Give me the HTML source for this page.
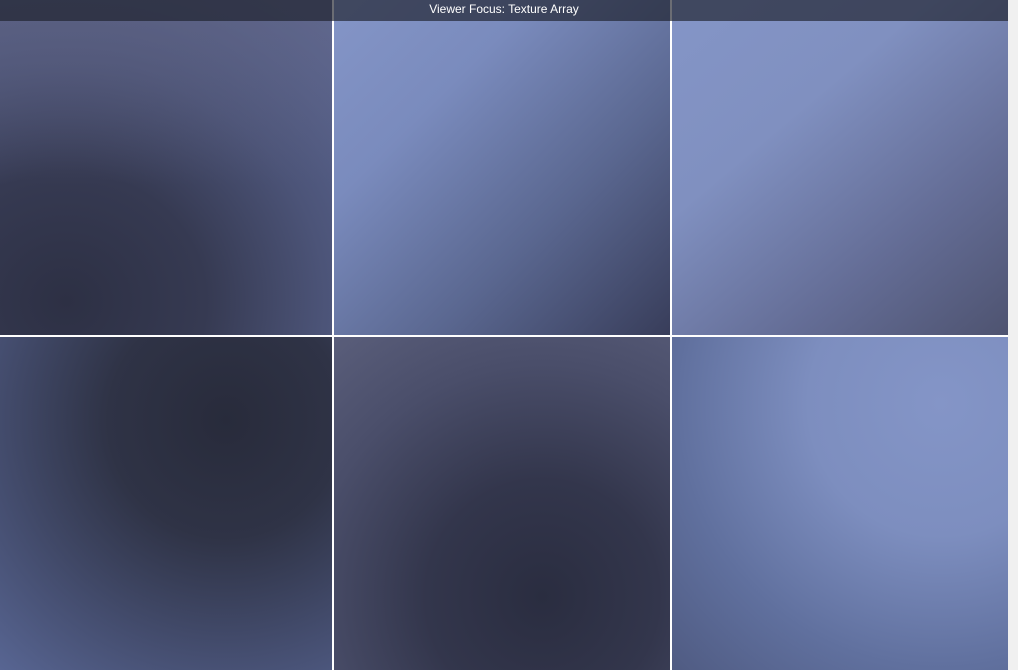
<!DOCTYPE html>
<html><head><style>
html,body{margin:0;padding:0;width:1018px;height:670px;overflow:hidden;background:#f0f0f0;font-family:"Liberation Sans",Roboto,sans-serif}
.t{position:absolute}
#bar{position:absolute;left:0;top:0;width:1008px;height:21px;background:rgba(28,30,42,0.65);color:#fff;font-size:12px;line-height:18px;text-align:center;z-index:2}
.g{position:absolute;background:#fff}
</style></head><body>
<div class="t" style="left:0;top:0;width:332px;height:335px;background:radial-gradient(ellipse 120% 110% at 20% 90%,#2d3044 0%,#363a52 35%,#4c5478 65%,#5e6a98 100%),#444"></div>
<div class="t" style="left:0;top:0;width:332px;height:335px;background:linear-gradient(180deg,rgba(95,98,128,0.6) 0%,rgba(95,98,128,0) 55%)"></div>
<div class="t" style="left:334px;top:0;width:336px;height:335px;background:linear-gradient(135deg,#8495c7 0%,#7a8bbd 30%,#5a6790 65%,#383d5a 100%)"></div>
<div class="t" style="left:672px;top:0;width:336px;height:335px;background:linear-gradient(140deg,#8495c7 0%,#8090c0 35%,#646d96 70%,#4e5370 100%)"></div>
<div class="t" style="left:0;top:337px;width:332px;height:333px;background:radial-gradient(circle at 68% 25%,#282b3b 0%,#2f3346 35%,#454e70 70%,#5e6d9e 110%)"></div>
<div class="t" style="left:334px;top:337px;width:336px;height:333px;background:radial-gradient(circle at 62% 78%,#2a2d40 0%,#33364c 35%,#4a4e6a 70%,#5f6380 110%)"></div>
<div class="t" style="left:672px;top:337px;width:336px;height:333px;background:radial-gradient(circle at 80% 20%,#8495c7 0%,#7d8ebf 35%,#60709e 70%,#4a5479 110%)"></div>
<div class="g" style="left:332px;top:0;width:2px;height:670px"></div>
<div class="g" style="left:670px;top:0;width:2px;height:670px"></div>
<div class="g" style="left:0;top:335px;width:1008px;height:2px"></div>
<div id="bar">Viewer Focus: Texture Array</div>
</body></html>
